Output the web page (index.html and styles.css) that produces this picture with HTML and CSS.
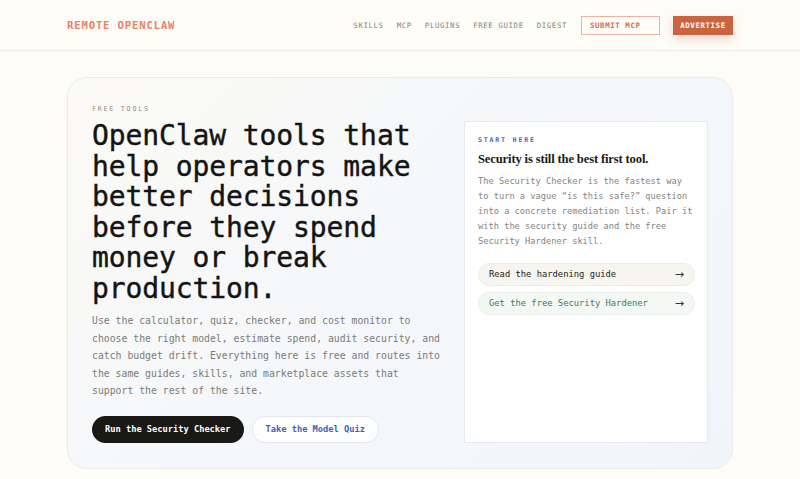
FILE: index.html
```html
<!DOCTYPE html>
<html lang="en">
<head>
    <meta charset="UTF-8">
    <meta name="viewport" content="width=device-width, initial-scale=1.0">
    <title>Free Tools | Remote OpenClaw</title>
    <link rel="stylesheet" href="styles.css">
</head>
<body>

    <header class="site-header">
        <div class="container header-row">
            <a class="logo" href="#">REMOTE OPENCLAW</a>
            <nav class="nav">
                <a href="#">SKILLS</a>
                <a href="#">MCP</a>
                <a href="#">PLUGINS</a>
                <a href="#">FREE GUIDE</a>
                <a href="#">DIGEST</a>
                <a class="btn-submit" href="#">SUBMIT MCP</a>
                <a class="btn-advertise" href="#">ADVERTISE</a>
            </nav>
        </div>
    </header>

    <main class="container">
        <section class="hero">
            <div class="hero-main">
                <p class="eyebrow">FREE TOOLS</p>
                <h1>OpenClaw tools that help operators make better decisions before they spend money or break production.</h1>
                <p class="lead">Use the calculator, quiz, checker, and cost monitor to choose the right model, estimate spend, audit security, and catch budget drift. Everything here is free and routes into the same guides, skills, and marketplace assets that support the rest of the site.</p>
                <div class="actions">
                    <a class="btn btn-dark" href="#">Run the Security Checker</a>
                    <a class="btn btn-light" href="#">Take the Model Quiz</a>
                </div>
            </div>

            <aside class="start-card">
                <p class="eyebrow eyebrow-blue">START HERE</p>
                <h2>Security is still the best first tool.</h2>
                <p class="card-text">The Security Checker is the fastest way to turn a vague “is this safe?” question into a concrete remediation list. Pair it with the security guide and the free Security Hardener skill.</p>
                <div class="card-links">
                    <a class="pill" href="#"><span>Read the hardening guide</span><span class="arrow">→</span></a>
                    <a class="pill pill-green" href="#"><span>Get the free Security Hardener</span><span class="arrow">→</span></a>
                </div>
            </aside>
        </section>
    </main>

</body>
</html>
```

FILE: styles.css
```css
/* Reset */
* {
    margin: 0;
    padding: 0;
    box-sizing: border-box;
}

body {
    font-family: "DejaVu Sans Mono", "Liberation Mono", monospace;
    background-color: #fdfcf7;
    color: #151515;
}

a {
    text-decoration: none;
    color: inherit;
}

.container {
    width: 666px;
    margin: 0 auto;
}

/* Header */
.site-header {
    border-bottom: 1px solid #efeee8;
    height: 51px;
}

.header-row {
    height: 50px;
    display: flex;
    align-items: center;
    justify-content: space-between;
}

.logo {
    font-size: 10.5px;
    font-weight: bold;
    letter-spacing: 0.9px;
    color: #ea8068;
}

.nav {
    display: flex;
    align-items: center;
    gap: 13px;
    font-size: 7.4px;
    letter-spacing: 0.6px;
    color: #85847f;
}

.btn-submit {
    display: flex;
    align-items: center;
    width: 79px;
    height: 19px;
    padding: 0 8px;
    margin-left: 1px;
    border: 1px solid #eab3a4;
    color: #d46d50;
    font-weight: bold;
}

.btn-advertise {
    display: flex;
    align-items: center;
    justify-content: center;
    width: 60px;
    height: 19px;
    background-color: #c9643f;
    color: #fff;
    font-weight: bold;
    box-shadow: 0 4px 10px rgba(201, 100, 63, 0.25);
}

/* Hero card */
.hero {
    margin-top: 26px;
    padding: 26px 25px 25px 24px;
    border: 1px solid #ecebe4;
    border-radius: 20px;
    background: linear-gradient(135deg, #fbfaf4 0%, #f5f7fa 45%, #f1f5fb 100%);
    display: grid;
    grid-template-columns: 352px 244px;
    column-gap: 20px;
    align-items: end;
}

.eyebrow {
    font-size: 6.6px;
    line-height: 10px;
    letter-spacing: 1.8px;
    color: #8d8c88;
}

.eyebrow-blue {
    color: #4a66b8;
    font-weight: bold;
}

h1 {
    margin-top: 7px;
    font-size: 28px;
    line-height: 30.5px;
    font-weight: normal;
    color: #141414;
    letter-spacing: -0.1px;
    -webkit-text-stroke: 0.4px #141414;
}

.lead {
    margin-top: 8px;
    font-size: 9.8px;
    line-height: 17.5px;
    color: #7b7b78;
}

.actions {
    margin-top: 16px;
    display: flex;
    gap: 8px;
}

.btn {
    display: flex;
    align-items: center;
    height: 27px;
    padding: 0 13px;
    border-radius: 14px;
    font-size: 8.7px;
    font-weight: bold;
}

.btn-dark {
    background-color: #1b1916;
    color: #fff;
}

.btn-light {
    background-color: #fff;
    border: 1px solid #e3e6ec;
    color: #3f5fb6;
}

/* Side card */
.start-card {
    height: 322px;
    background-color: #fff;
    border: 1px solid #e6e9f0;
    padding: 13px 10px 0 13px;
}

.start-card h2 {
    margin-top: 5px;
    font-family: "Liberation Serif", "DejaVu Serif", serif;
    font-size: 12.6px;
    line-height: 18px;
    letter-spacing: -0.15px;
    font-weight: bold;
    color: #1a1a1a;
}

.card-text {
    margin-top: 6px;
    font-size: 8.7px;
    line-height: 15.2px;
    color: #838380;
}

.card-links {
    margin-top: 13px;
    margin-right: 2px;
    display: flex;
    flex-direction: column;
    gap: 6px;
}

.pill {
    display: flex;
    align-items: center;
    justify-content: space-between;
    height: 23px;
    padding: 0 10px 0 10px;
    border-radius: 12px;
    border: 1px solid #eeece5;
    background-color: #f7f5ef;
    font-size: 8.8px;
    color: #222;
}

.pill-green {
    background-color: #f4f8f4;
    border-color: #e7efe8;
    color: #3d7a58;
}

.arrow {
    font-family: "DejaVu Sans", sans-serif;
    font-size: 11px;
    color: #333;
}
```
